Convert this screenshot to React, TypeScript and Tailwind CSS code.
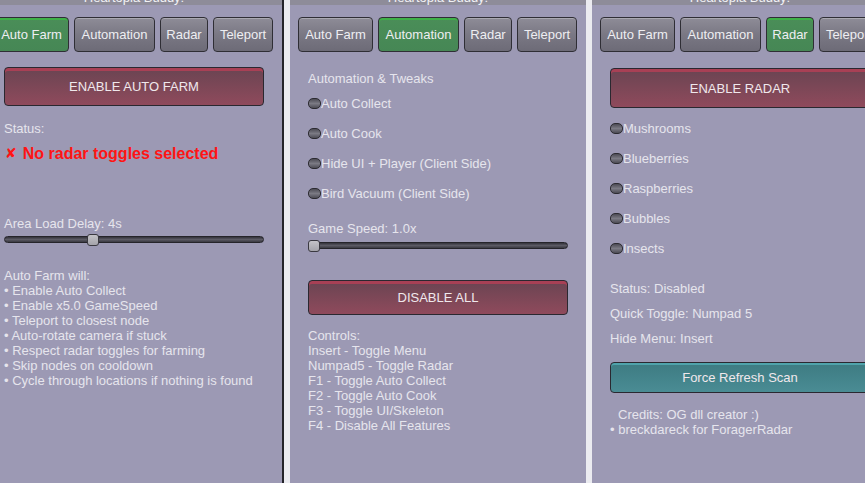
import React from 'react';

const TABS = [
  { label: 'Auto Farm', w: 'w-[75px]' },
  { label: 'Automation', w: 'w-[81px]' },
  { label: 'Radar', w: 'w-[48px]' },
  { label: 'Teleport', w: 'w-[60px]' },
];

const Header: React.FC = () => (
  <div className="h-[5px] overflow-hidden bg-[#8e8c99] text-center">
    <div className="mt-[-9px] text-[13px] leading-[13px] text-[#f2f2f5]">Heartopia Buddy!</div>
  </div>
);

const TabBar: React.FC<{ active: number }> = ({ active }) => (
  <div className="mt-[12px] flex gap-[5px] pl-[8px]">
    {TABS.map((t, i) => (
      <div
        key={t.label}
        className={`${t.w} flex h-[35px] shrink-0 items-center justify-center rounded-[4px] border border-[#2f2e35] text-[13px] text-[#eeeef2] ${
          i === active
            ? 'bg-linear-to-b from-[#4a8e58] to-[#468755] shadow-[inset_0_2px_0_#3fb048]'
            : 'bg-linear-to-b from-[#8e8c97] via-[#7a7884] to-[#6d6b77] shadow-[inset_0_1px_0_rgba(255,255,255,0.25)]'
        }`}
      >
        {t.label}
      </div>
    ))}
  </div>
);

const BigButton: React.FC<{ label: string; tone: 'red' | 'teal'; h: string; className?: string }> = ({
  label,
  tone,
  h,
  className = '',
}) => (
  <div
    className={`${h} ${className} ml-[18px] flex w-[260px] shrink-0 items-center justify-center rounded-[4px] border border-[#2a2830] text-[13px] text-[#f0e8ec] ${
      tone === 'red'
        ? 'bg-linear-to-b from-[#6a4452] to-[#8f4a5c] shadow-[inset_0_3px_0_#a84055]'
        : 'bg-linear-to-b from-[#3d7b82] to-[#4a8c94] shadow-[inset_0_2px_0_#4fa3ab]'
    }`}
  >
    {label}
  </div>
);

const Check: React.FC<{ label: string }> = ({ label }) => (
  <div className="flex h-[15px] items-center">
    <span className="h-[11px] w-[13px] shrink-0 rounded-[5px] border border-[#2c2b31] bg-linear-to-b from-[#4d4c55] via-[#7b7a84] to-[#4d4c55]" />
    <span>{label}</span>
  </div>
);

const Slider: React.FC<{ left: string }> = ({ left }) => (
  <div className="relative ml-[18px] h-[12px] w-[260px]">
    <div className="absolute inset-x-0 top-[2px] h-[7px] rounded-full border border-[#25242a] bg-linear-to-b from-[#34333b] via-[#5b5a64] to-[#3a3941]" />
    <div
      className={`absolute top-0 ${left} h-[12px] w-[12px] rounded-[3px] border border-[#3a3940] bg-linear-to-b from-[#c4c3c8] to-[#a4a3aa]`}
    />
  </div>
);

const Lines: React.FC<{ lines: string[]; className?: string }> = ({ lines, className = '' }) => (
  <div className={`${className} ml-[18px] flex flex-col`}>
    {lines.map(l => (
      <div key={l} className="h-[15px] whitespace-nowrap">
        {l}
      </div>
    ))}
  </div>
);

const AutoFarmPanel: React.FC = () => (
  <div className="ml-[-14px] flex w-[296px] shrink-0 flex-col bg-[#9c99b4]">
    <Header />
    <TabBar active={0} />
    <BigButton label="ENABLE AUTO FARM" tone="red" h="h-[39px]" className="mt-[15px]" />
    <div className="mt-[15px] ml-[18px] h-[15px]">Status:</div>
    <div className="mt-[8px] ml-[19px] flex h-[18px] items-center gap-[6px] text-[16px] font-bold text-[#ff1414]">
      <span className="font-['DejaVu_Sans',sans-serif] text-[14px]">✘</span>
      <span>No radar toggles selected</span>
    </div>
    <div className="mt-[54px] ml-[18px] h-[15px]">Area Load Delay: 4s</div>
    <div className="mt-[3px]">
      <Slider left="left-[83px]" />
    </div>
    <Lines
      className="mt-[22px]"
      lines={[
        'Auto Farm will:',
        '• Enable Auto Collect',
        '• Enable x5.0 GameSpeed',
        '• Teleport to closest node',
        '• Auto-rotate camera if stuck',
        '• Respect radar toggles for farming',
        '• Skip nodes on cooldown',
        '• Cycle through locations if nothing is found',
      ]}
    />
  </div>
);

const AutomationPanel: React.FC = () => (
  <div className="flex w-[296px] shrink-0 flex-col bg-[#9c99b4]">
    <Header />
    <TabBar active={1} />
    <div className="mt-[19px] ml-[18px] h-[15px]">Automation &amp; Tweaks</div>
    <div className="mt-[10px] ml-[18px] flex flex-col gap-[15px]">
      <Check label="Auto Collect" />
      <Check label="Auto Cook" />
      <Check label="Hide UI + Player (Client Side)" />
      <Check label="Bird Vacuum (Client Side)" />
    </div>
    <div className="mt-[20px] ml-[18px] h-[15px]">Game Speed: 1.0x</div>
    <div className="mt-[4px]">
      <Slider left="left-0" />
    </div>
    <BigButton label="DISABLE ALL" tone="red" h="h-[35px]" className="mt-[28px]" />
    <Lines
      className="mt-[13px]"
      lines={[
        'Controls:',
        'Insert - Toggle Menu',
        'Numpad5 - Toggle Radar',
        'F1 - Toggle Auto Collect',
        'F2 - Toggle Auto Cook',
        'F3 - Toggle UI/Skeleton',
        'F4 - Disable All Features',
      ]}
    />
  </div>
);

const RadarPanel: React.FC = () => (
  <div className="flex w-[296px] shrink-0 flex-col bg-[#9c99b4]">
    <Header />
    <TabBar active={2} />
    <BigButton label="ENABLE RADAR" tone="red" h="h-[40px]" className="mt-[16px]" />
    <div className="mt-[13px] ml-[18px] flex flex-col gap-[15px]">
      <Check label="Mushrooms" />
      <Check label="Blueberries" />
      <Check label="Raspberries" />
      <Check label="Bubbles" />
      <Check label="Insects" />
    </div>
    <div className="mt-[25px] ml-[18px] flex flex-col gap-[10px]">
      <div className="h-[15px]">Status: Disabled</div>
      <div className="h-[15px]">Quick Toggle: Numpad 5</div>
      <div className="h-[15px]">Hide Menu: Insert</div>
    </div>
    <BigButton label="Force Refresh Scan" tone="teal" h="h-[31px]" className="mt-[16px]" />
    <div className="mt-[14px] ml-[26px] h-[15px]">Credits: OG dll creator :)</div>
    <div className="ml-[18px] h-[15px]">• breckdareck for ForagerRadar</div>
  </div>
);

export default function App() {
  return (
    <div className="flex h-[483px] w-[865px] overflow-hidden bg-[#ebebf0] font-['Liberation_Sans',Arial,sans-serif] text-[13px] leading-[15px] text-[#e6e5ed]">
      <AutoFarmPanel />
      <div className="w-[2px] shrink-0 bg-[#24232a]" />
      <div className="w-[6px] shrink-0" />
      <AutomationPanel />
      <div className="w-[6px] shrink-0" />
      <RadarPanel />
    </div>
  );
}
